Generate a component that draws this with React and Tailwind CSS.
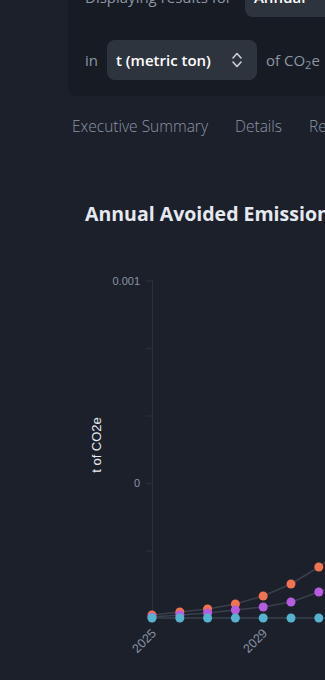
import React from 'react';

const xs = [152, 179.8, 207.6, 235.4, 263.2, 291, 318.8, 346.6];
const series = [
    { color: '#f07352', ys: [615, 612, 609, 604, 596, 584, 567, 548] },
    { color: '#b65ce0', ys: [617, 615, 613, 610, 607, 602, 592, 580] },
    { color: '#56b3cf', ys: [618, 618, 618, 618, 618, 618, 618, 618] },
];

// chart svg starts at page y=228
const OY = 228;

const UpDown = () => (
    <svg width="10" height="16" viewBox="0 0 10 16" fill="none" stroke="#c9ced6" strokeWidth="1.6" strokeLinecap="round" strokeLinejoin="round">
        <path d="M1 6 L5 1.5 L9 6" />
        <path d="M1 10 L5 14.5 L9 10" />
    </svg>
);

const Chart = () => (
    <svg width="325" height="452" className="block" style={{ fontFamily: '"Liberation Sans", Arial, sans-serif' }}>
        <line x1="152.5" y1={280 - OY} x2="152.5" y2={622 - OY} stroke="#2c323c" strokeWidth="1" />
        {[281, 348.5, 416, 483.5, 551, 618].map(y => (
            <line key={y} x1="146" y1={y - OY} x2="152" y2={y - OY} stroke="#2c323c" strokeWidth="1" />
        ))}
        {xs.map(x => (
            <line key={x} x1={x} y1={618 - OY} x2={x} y2={623 - OY} stroke="#2c323c" strokeWidth="1" />
        ))}
        <text x="140" y={285 - OY} textAnchor="end" fontSize="11" fill="#8a94a3">0.001</text>
        <text x="140" y={487 - OY} textAnchor="end" fontSize="11" fill="#8a94a3">0</text>
        <text transform={`translate(101 ${445 - OY}) rotate(-90)`} textAnchor="middle" fontSize="13" fill="#e8ebf0">t of CO2e</text>
        <text transform={`translate(157 ${634 - OY}) rotate(-45)`} textAnchor="end" fontSize="12.5" fill="#8a94a3">2025</text>
        <text transform={`translate(268 ${634 - OY}) rotate(-45)`} textAnchor="end" fontSize="12.5" fill="#8a94a3">2029</text>
        {series.map(s => (
            <polyline key={s.color} fill="none" stroke="#3a404b" strokeWidth="1.5"
                points={xs.map((x, i) => `${x},${s.ys[i] - OY}`).join(' ')} />
        ))}
        {series.map(s => xs.map((x, i) => (
            <circle key={s.color + i} cx={x} cy={s.ys[i] - OY} r="4.5" fill={s.color} />
        )))}
    </svg>
);

const App = () => {
    return (
        <div className="h-[680px] w-[325px] overflow-hidden bg-[#1b202b]" style={{ fontFamily: '"Open Sans", sans-serif' }}>
            <div className="ml-[68px] mt-[-39px] w-[300px] rounded-b-lg bg-[#171b24] pl-[17px] pt-4 pb-4">
                <div className="flex items-center gap-[13px]">
                    <span className="whitespace-nowrap text-[15px] text-[#8d96a3]">Displaying results for</span>
                    <div className="flex h-10 w-[120px] shrink-0 items-center rounded-lg bg-[#2e343e] px-[9px] text-[15px] font-semibold text-white">Annual</div>
                </div>
                <div className="mt-[23px] flex items-center">
                    <span className="mr-[9px] text-[15px] text-[#8d96a3]">in</span>
                    <div className="flex h-10 w-[150px] shrink-0 items-center justify-between rounded-lg bg-[#2e343e] pl-[9px] pr-[15px]">
                        <span className="whitespace-nowrap text-[15px] font-semibold text-white">t (metric ton)</span>
                        <UpDown />
                    </div>
                    <span className="ml-[9px] whitespace-nowrap text-[15px] text-[#8d96a3]">of CO<sub className="text-[11px]">2</sub>e</span>
                </div>
            </div>

            <div className="mt-5 flex gap-[27px] whitespace-nowrap pl-[72px] text-[15.5px] leading-5 font-light text-[#8d96a3]">
                <span>Executive Summary</span>
                <span>Details</span>
                <span>Reports</span>
            </div>

            <h2 className="mt-16 whitespace-nowrap pl-[85px] text-[19.5px] leading-7 font-bold text-[#e5e9f0]">Annual Avoided Emissions</h2>

            <Chart />
        </div>
    );
};

export default App;
